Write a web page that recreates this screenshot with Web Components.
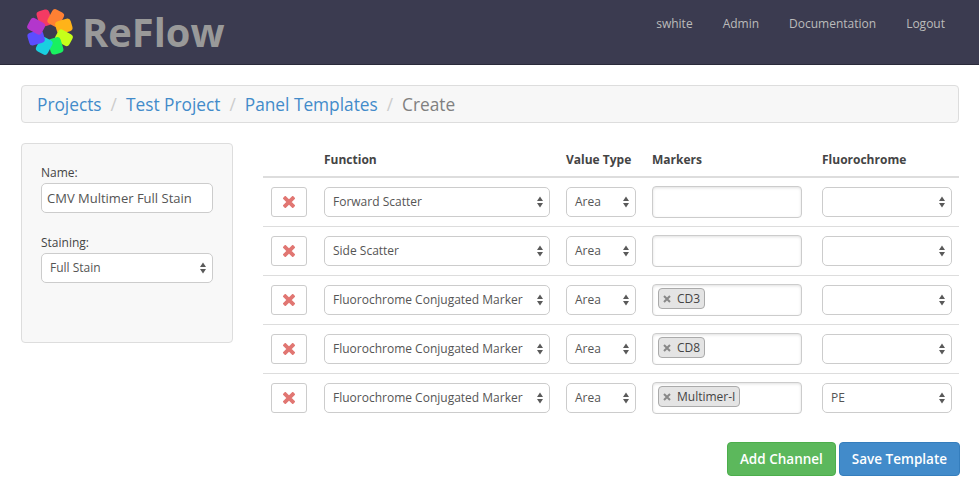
<!DOCTYPE html>
<html>
<head>
<meta charset="utf-8">
<title>ReFlow</title>
<style>
  html, body { margin: 0; padding: 0; background: #fff; }
  body { font-family: "Open Sans", sans-serif; color: #555; font-size: 12px; }
</style>
</head>
<body>
<app-navbar></app-navbar>
<app-breadcrumb></app-breadcrumb>
<template-editor></template-editor>

<script>
const ARROWS = `<svg width="6" height="12" viewBox="0 0 6 12"><path d="M3 .5 6 5H0zM0 7h6l-3 4.5z" fill="#5a5a5a"/></svg>`;

class AppNavbar extends HTMLElement {
  constructor() {
    super();
    this.attachShadow({ mode: "open" });
    const colors = ["#f43a63", "#ff8033", "#ffb319", "#c6ff1a", "#19f060", "#19cfe0", "#5c4dff", "#b336cc"];
    const petals = colors.map((c, i) => {
      const a = -22.5 + i * 45;
      return `<rect transform="rotate(${a} 25 25) rotate(6 25 10)" x="18.5" y="2" width="13" height="16" rx="3.5" fill="${c}"/>`;
    }).join("");
    this.shadowRoot.innerHTML = `
    <style>
      :host { display: flex; align-items: center; height: 64px; background: #3b3b50; border-bottom: 1px solid #2a2a3a; padding: 0 34px 0 25px; }
      svg { display: block; flex: none; }
      .brand { font-size: 39.8px; font-weight: 700; color: #999; margin-left: 7px; line-height: 64px; }
      nav { align-self: flex-start; margin-left: auto; padding-top: 15px; display: flex; gap: 30px; font-size: 12px; color: #bbb; }
    </style>
    <svg width="50" height="50" viewBox="0 0 50 50">${petals}</svg>
    <div class="brand">ReFlow</div>
    <nav><span>swhite</span><span>Admin</span><span>Documentation</span><span>Logout</span></nav>
    `;
  }
}

class AppBreadcrumb extends HTMLElement {
  constructor() {
    super();
    this.attachShadow({ mode: "open" });
    this.shadowRoot.innerHTML = `
    <style>
      :host { display: flex; align-items: center; height: 36px; margin: 20px 20px 0 21px; padding: 0 15px; background: #f7f7f7; border: 1px solid #ddd; border-radius: 4px; font-size: 17.3px; color: #808080; }
      a { color: #428bca; }
      i { font-style: normal; color: #ccc; padding: 0 9px; }
    </style>
    <a>Projects</a><i>/</i><a>Test Project</a><i>/</i><a>Panel Templates</a><i>/</i><span>Create</span>
    `;
  }
}

class SelectBox extends HTMLElement {
  constructor() {
    super();
    this.attachShadow({ mode: "open" });
    this.shadowRoot.innerHTML = `
    <style>
      :host { display: flex; align-items: center; justify-content: space-between; box-sizing: border-box; height: 30px; padding: 0 6px 0 8px; background: #fff; border: 1px solid #ccc; border-radius: 5px; font-size: 12px; color: #555; white-space: nowrap; }
      span { margin-top: -2px; }
      svg { display: block; flex: none; }
    </style>
    <span><slot></slot></span>${ARROWS}
    `;
  }
}

class MarkerTag extends HTMLElement {
  constructor() {
    super();
    this.attachShadow({ mode: "open" });
    this.shadowRoot.innerHTML = `
    <style>
      :host { display: inline-flex; align-items: center; box-sizing: border-box; height: 21px; padding: 0 4px; background: #e4e4e4; border: 1px solid #aaa; border-radius: 4px; font-size: 12px; color: #444; }
      svg { display: block; margin-right: 6px; }
    </style>
    <svg width="8" height="8" viewBox="0 0 8 8"><path d="M1 1l6 6M7 1L1 7" stroke="#888" stroke-width="2"/></svg><slot></slot>
    `;
  }
}

class MarkerInput extends HTMLElement {
  constructor() {
    super();
    this.attachShadow({ mode: "open" });
    this.shadowRoot.innerHTML = `
    <style>
      :host { display: flex; align-items: flex-start; box-sizing: border-box; height: 32px; padding: 3px 5px; background: #fff; border: 1px solid #ccc; border-radius: 4px; box-shadow: inset 0 1px 3px rgba(0,0,0,.12); }
    </style>
    <slot></slot>
    `;
  }
}

class DeleteButton extends HTMLElement {
  constructor() {
    super();
    this.attachShadow({ mode: "open" });
    this.shadowRoot.innerHTML = `
    <style>
      :host { display: flex; align-items: center; justify-content: center; box-sizing: border-box; height: 30px; background: #fff; border: 1px solid #ccc; border-radius: 3px; }
    </style>
    <svg width="12" height="12" viewBox="0 0 12 12"><path d="M2.3 2.3l7.4 7.4M9.7 2.3l-7.4 7.4" stroke="#e17672" stroke-width="3.8" stroke-linecap="square"/></svg>
    `;
  }
}

class ChannelRow extends HTMLElement {
  constructor() {
    super();
    this.attachShadow({ mode: "open" });
    this.shadowRoot.innerHTML = `
    <style>
      :host { display: grid; grid-template-columns: 53px 242px 86px 170px 130px; align-items: center; padding: 8px; border-bottom: 1px solid #ddd; }
      :host(:last-of-type) { border-bottom: 0; padding-bottom: 9px; }
      ::slotted(:nth-child(1)) { margin-right: 17px; }
      ::slotted(:nth-child(2)), ::slotted(:nth-child(3)) { margin-right: 16px; }
      ::slotted(:nth-child(4)) { margin-right: 20px; }
    </style>
    <slot></slot>
    `;
  }
}

class TemplateEditor extends HTMLElement {
  constructor() {
    super();
    this.attachShadow({ mode: "open" });
    const rows = [
      ["Forward Scatter", "", ""],
      ["Side Scatter", "", ""],
      ["Fluorochrome Conjugated Marker", "CD3", ""],
      ["Fluorochrome Conjugated Marker", "CD8", ""],
      ["Fluorochrome Conjugated Marker", "Multimer-I", "PE"],
    ].map(([fn, marker, fluoro]) => `
      <channel-row>
        <delete-button></delete-button>
        <select-box>${fn}</select-box>
        <select-box>Area</select-box>
        <marker-input>${marker ? `<marker-tag>${marker}</marker-tag>` : ""}</marker-input>
        <select-box>${fluoro}</select-box>
      </channel-row>`).join("");
    this.shadowRoot.innerHTML = `
    <style>
      :host { display: flex; align-items: flex-start; gap: 30px; margin: 20px 20px 0 21px; }
      .well { box-sizing: border-box; width: 212px; height: 200px; flex: none; padding: 19px; background: #f8f8f8; border: 1px solid #ddd; border-radius: 4px; }
      label { display: block; font-size: 12px; color: #444; line-height: 20px; }
      .name { box-sizing: border-box; height: 30px; line-height: 28px; padding: 0 5px; background: #fff; border: 1px solid #ccc; border-radius: 5px; color: #555; font-size: 13px; margin-bottom: 20px; white-space: nowrap; }
      .table { flex: 1; min-width: 0; }
      .head { display: grid; grid-template-columns: 53px 242px 86px 170px 130px; box-sizing: border-box; height: 35px; padding: 8px 8px 0; border-bottom: 2px solid #ddd; font-weight: 700; font-size: 12px; color: #444; line-height: 18px; }
      .actions { display: flex; justify-content: flex-end; gap: 3px; margin-top: 19px; margin-right: -1px; }
      .btn { box-sizing: border-box; height: 34px; display: flex; align-items: center; padding: 0 12px; border-radius: 4px; color: #fff; font-size: 13.5px; font-weight: 600; }
      .green { background: #5cb85c; border: 1px solid #4cae4c; }
      .blue { background: #428bca; border: 1px solid #357ebd; }
    </style>
    <div class="well">
      <label>Name:</label>
      <div class="name">CMV Multimer Full Stain</div>
      <label>Staining:</label>
      <select-box>Full Stain</select-box>
    </div>
    <div class="table">
      <div class="head"><span></span><span>Function</span><span>Value Type</span><span>Markers</span><span>Fluorochrome</span></div>
      ${rows}
      <div class="actions"><div class="btn green">Add Channel</div><div class="btn blue">Save Template</div></div>
    </div>
    `;
  }
}

customElements.define("select-box", SelectBox);
customElements.define("marker-tag", MarkerTag);
customElements.define("marker-input", MarkerInput);
customElements.define("delete-button", DeleteButton);
customElements.define("channel-row", ChannelRow);
customElements.define("app-navbar", AppNavbar);
customElements.define("app-breadcrumb", AppBreadcrumb);
customElements.define("template-editor", TemplateEditor);
</script>
</body>
</html>
